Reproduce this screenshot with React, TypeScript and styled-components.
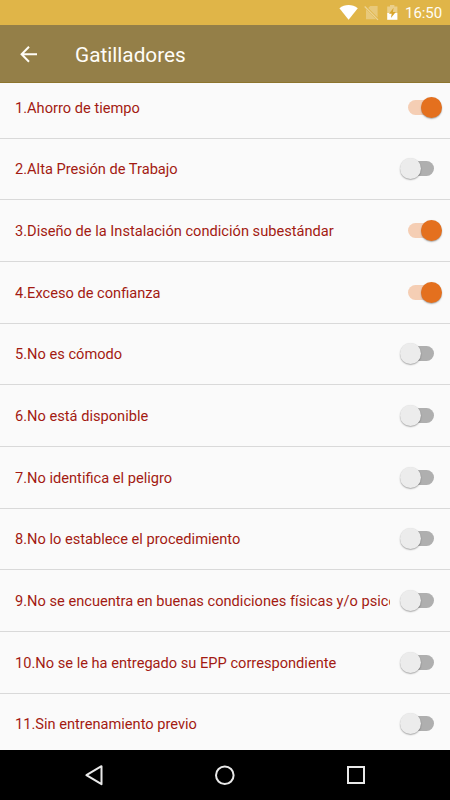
import React, { useState } from "react";
import styled, { createGlobalStyle } from "styled-components";

const GlobalStyle = createGlobalStyle`
  * { box-sizing: border-box; }
  body { margin: 0; background: #fafafa; font-family: Roboto, sans-serif; }
`;

const Screen = styled.div`
  width: 450px;
  height: 800px;
  display: flex;
  flex-direction: column;
  overflow: hidden;
  background: #fafafa;
`;

const StatusBar = styled.div`
  flex: none;
  height: 25px;
  display: flex;
  align-items: center;
  justify-content: flex-end;
  padding-right: 8px;
  background: #e0b548;
  color: #fffdf5;
`;

const StatusIcons = styled.svg`
  display: block;
  width: 66px;
  height: 25px;
`;

const Clock = styled.time`
  width: 37px;
  font-size: 15px;
  line-height: 25px;
  letter-spacing: -0.05px;
  padding-top: 1px;
  white-space: nowrap;
`;

const Toolbar = styled.header`
  flex: none;
  height: 58px;
  display: flex;
  align-items: center;
  padding-left: 17px;
  gap: 34px;
  background: #947f48;
  border-bottom: 1px solid #8d752e;
`;

const BackButton = styled.button`
  width: 24px;
  height: 24px;
  padding: 0;
  border: 0;
  background: none;
  svg { display: block; }
`;

const Title = styled.h1`
  margin: 0;
  padding-top: 2px;
  font-size: 20.75px;
  font-weight: 400;
  line-height: 28px;
  color: #fffdf7;
`;

const List = styled.main`
  flex: 1;
  min-height: 0;
  display: flex;
  flex-direction: column;
  justify-content: flex-start;
  overflow: hidden;
`;

const Row = styled.label`
  flex: none;
  height: 61.667px;
  display: flex;
  align-items: center;
  padding: 0 8px 0 15px;
  border-bottom: 1px solid #d9d9d9;
  &:first-child { margin-top: -6px; }
`;

const RowText = styled.span`
  flex: none;
  width: 375px;
  overflow: hidden;
  white-space: nowrap;
  font-size: 14.63px;
  line-height: 22px;
  padding-top: 0.7px;
  color: #a31a12;
`;

const Switch = styled.button<{ $on: boolean }>`
  flex: none;
  margin-left: 10px;
  width: 42px;
  height: 22px;
  padding: 0;
  border: 0;
  display: flex;
  align-items: center;
  justify-content: ${(p) => (p.$on ? "flex-end" : "flex-start")};
  background: transparent;
`;

const Track = styled.span<{ $on: boolean }>`
  display: flex;
  align-items: center;
  justify-content: ${(p) => (p.$on ? "flex-end" : "flex-start")};
  width: 26px;
  height: 15px;
  margin: 0 8px;
  border-radius: 8px;
  background: ${(p) => (p.$on ? "#f5ceb4" : "#afafaf")};
`;

const Thumb = styled.span<{ $on: boolean }>`
  flex: none;
  width: 21px;
  height: 21px;
  margin: ${(p) => (p.$on ? "0 -8px 0 0" : "0 0 0 -8px")};
  border-radius: 50%;
  background: ${(p) => (p.$on ? "#e4701e" : "#ececec")};
  box-shadow: 0 1px 1.5px rgba(0, 0, 0, 0.32), 0 0 1px rgba(0, 0, 0, 0.08);
`;

const NavBar = styled.nav`
  flex: none;
  height: 50px;
  background: #000;
  svg { display: block; }
`;

const triggers: [string, boolean][] = [
  ["Ahorro de tiempo", true],
  ["Alta Presión de Trabajo", false],
  ["Diseño de la Instalación condición subestándar", true],
  ["Exceso de confianza", true],
  ["No es cómodo", false],
  ["No está disponible", false],
  ["No identifica el peligro", false],
  ["No lo establece el procedimiento", false],
  ["No se encuentra en buenas condiciones físicas y/o psicológicas", false],
  ["No se le ha entregado su EPP correspondiente", false],
  ["Sin entrenamiento previo", false],
];

function TriggerRow({ text, initial }: { text: string; initial: boolean }) {
  const [on, setOn] = useState(initial);
  return (
    <Row>
      <RowText>{text}</RowText>
      <Switch $on={on} role="switch" aria-checked={on} onClick={() => setOn(!on)}>
        <Track $on={on}>
          <Thumb $on={on} />
        </Track>
      </Switch>
    </Row>
  );
}

export default function App() {
  return (
    <Screen>
      <GlobalStyle />
      <StatusBar>
        <StatusIcons viewBox="339 0 66 25" fill="none">
          <path d="M339.4 8.3C344.8 4 352.3 4 357.8 8.3L348.6 19.7Z" fill="#fff" />
          <path d="M370.2 6H377.6V17.4L368.2 8ZM366 9.2L376 19.2H366Z" fill="#fff" fillOpacity=".28" />
          <path d="M364.7 6.5L378 19.8" stroke="#fff" strokeOpacity=".42" strokeWidth="1.2" />
          <path d="M387.2 6.6H390V5H394.4V6.6H397.4V13H387.2Z" fill="#fff" fillOpacity=".36" />
          <path d="M387.2 13H397.4V19.8H387.2Z" fill="#fff" />
          <path d="M393.6 7.8L389 13.8H391.7L390.9 18L395.8 12H392.9Z" fill="#d9a52c" />
        </StatusIcons>
        <Clock>16:50</Clock>
      </StatusBar>
      <Toolbar>
        <BackButton aria-label="Atrás">
          <svg width="24" height="24" viewBox="0 0 24 24" fill="none" stroke="#fffdf7" strokeWidth="2">
            <path d="M20 12.3H5M12 4.8L4.6 12.3L12 19.8" />
          </svg>
        </BackButton>
        <Title>Gatilladores</Title>
      </Toolbar>
      <List>
        {triggers.map(([name, on], i) => (
          <TriggerRow key={name} text={`${i + 1}.${name}`} initial={on} />
        ))}
      </List>
      <NavBar>
        <svg width="450" height="50" fill="none" stroke="#e9e9e9" strokeWidth="2" strokeLinejoin="round">
          <path d="M86.4 25.2L101.5 16.2V34.2Z" />
          <circle cx="224.8" cy="25.2" r="8.8" />
          <path d="M348 17H364V33H348Z" strokeLinejoin="miter" />
        </svg>
      </NavBar>
    </Screen>
  );
}
